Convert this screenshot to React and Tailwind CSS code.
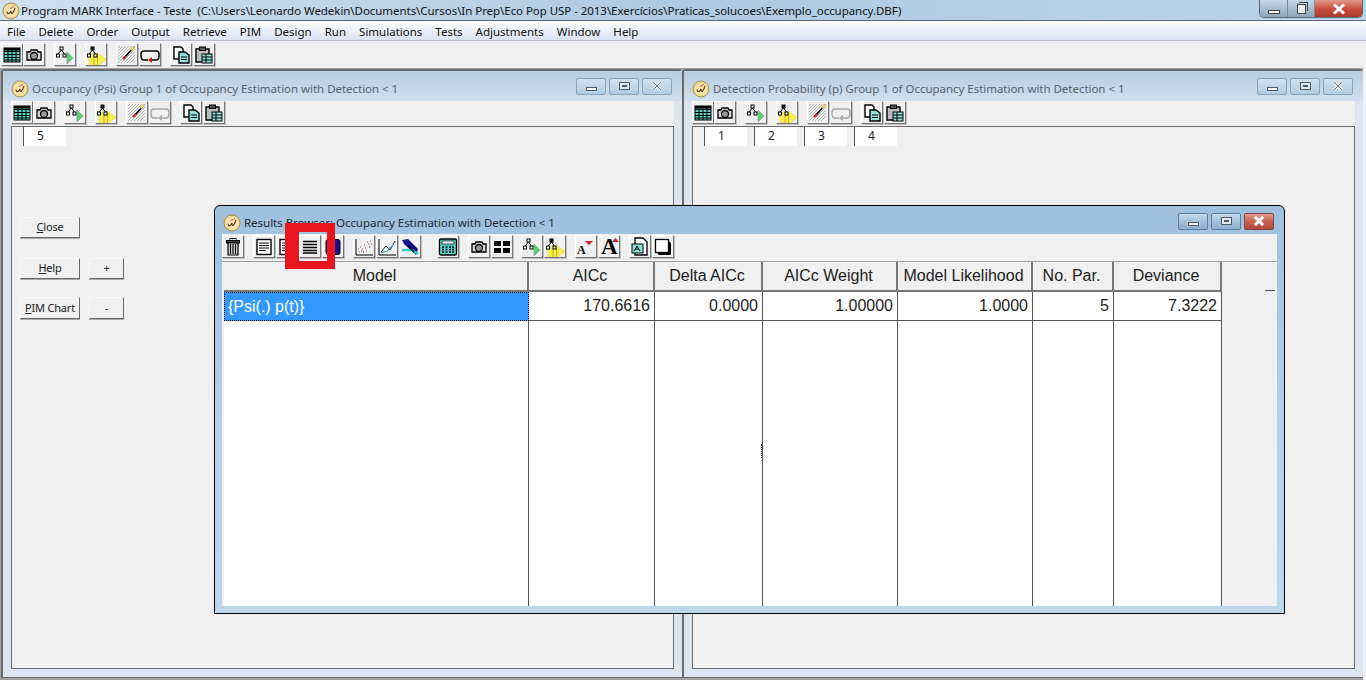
import React from "react";

const Logo = ({ className = "" }) => (
  <svg width="18" height="18" viewBox="0 0 18 18" className={className}>
    <circle cx="9" cy="9" r="8" fill="#f3d98f" stroke="#a98f5a" />
    <circle cx="9" cy="9" r="6" fill="#f7e4ad" />
    <path d="M5 9.5Q5.5 12.5 7 11.5T9 9Q9 12.5 10.5 11T13 6" fill="none" stroke="#5a3a1a" strokeWidth="1.1" />
    <path d="M8 6.5L12 4.5" stroke="#b33" strokeWidth="0.8" />
  </svg>
);

const S = ({ children }) => (
  <svg width="20" height="20" viewBox="0 0 20 20">{children}</svg>
);

const TableIcon = () => (
  <S>
    <rect x="2" y="3" width="16" height="14" fill="#5fd0c4" stroke="#000" />
    <path d="M2 6.5H18M2 9.5H18M2 12.5H18M2 15H18M6 3V17M10 3V17M14 3V17" stroke="#000" strokeWidth="1" />
    <rect x="2" y="3" width="16" height="2.5" fill="#000" />
  </S>
);
const CameraIcon = () => (
  <S>
    <path d="M3 7H6L7 5H13L14 7H17V15H3Z" fill="#d8d8d8" stroke="#000" strokeWidth="1.3" />
    <circle cx="10" cy="11" r="3.5" fill="#999" stroke="#000" strokeWidth="1.3" />
    <rect x="4" y="6" width="2" height="1" fill="#000" />
  </S>
);
const TreeArrow = ({ wide }) => (
  <S>
    {wide ? (
      <>
        <path d="M3 9H13L20 14.5L13 20H3Z" fill="#f6f04e" stroke="#ece25a" strokeWidth="0.8" />
        <path d="M8 11V20M11.5 10V20" stroke="#d0b030" />
      </>
    ) : (
      <path d="M12 7L18 13L12 19Z" fill="#5bd06a" stroke="#8a9" strokeWidth="0.8" />
    )}
    <rect x="5" y="2" width="3" height="3" fill={wide ? "#222" : "#fff"} stroke="#000" />
    <rect x="1.5" y="9" width="3" height="3" fill="#fff" stroke="#000" />
    <rect x="8" y="9" width="3" height="3" fill="#fff" stroke="#000" />
    <path d="M6.5 5L3 9M6.5 5L9.5 9" stroke="#000" />
  </S>
);
const WandIcon = () => (
  <S>
    <path d="M1 3L3 1M1 6L6 1M1 9L9 1M1 12L12 1M1 15L15 1M1 18L18 1M4 18L18 4M7 18L18 7M10 18L18 10M13 18L18 13" stroke="#a8a8a8" strokeWidth="0.9" />
    <path d="M8 12L17 2" stroke="#000" strokeWidth="1.6" />
    <path d="M14 5L17 2" stroke="#e8d64a" strokeWidth="2.2" />
    <path d="M6 14L9 11" stroke="#c22" strokeWidth="2.4" />
  </S>
);
const LoopIcon = ({ disabled }) => (
  <S>
    <path
      d="M8 15H4Q1 15 1 11V9Q1 6 4 6H16Q19 6 19 9V11Q19 15 16 15H12"
      fill="none"
      stroke={disabled ? "#a8a8a8" : "#000"}
      strokeWidth="1.5"
    />
    <path d="M12 12L8 15L12 18Z" fill={disabled ? "#a8a8a8" : "#d01818"} />
  </S>
);
const CopyIcon = () => (
  <S>
    <path d="M3 2H10L12 4V14H3Z" fill="#fff" stroke="#000" strokeWidth="1.4" />
    <path d="M8 7H14L18 10V18H8Z" fill="#8fe0d8" stroke="#000" strokeWidth="1.4" />
    <path d="M10 12H16M10 14.5H16" stroke="#000" />
  </S>
);
const PasteIcon = () => (
  <S>
    <path d="M2 4H15V17H2Z" fill="#bdbdbd" stroke="#000" strokeWidth="1.4" />
    <rect x="5.5" y="2" width="6" height="3.5" fill="#555" stroke="#000" />
    <rect x="8" y="9" width="10" height="9" fill="#8fe0d8" stroke="#000" />
    <path d="M8 12H18M8 15H18M12 9V18" stroke="#000" />
  </S>
);
const TrashIcon = () => (
  <S>
    <rect x="7" y="1.5" width="6" height="2" fill="none" stroke="#000" />
    <rect x="3.5" y="3.5" width="13" height="2.5" fill="#444" stroke="#000" />
    <path d="M5 6H15V18H5Z" fill="#ddd" stroke="#000" strokeWidth="1.2" />
    <path d="M7.5 7V17M10 7V17M12.5 7V17" stroke="#000" strokeWidth="1.2" />
  </S>
);
const LinesIcon = () => (
  <S>
    <rect x="3" y="2.5" width="14" height="15" fill="#fff" stroke="#000" strokeWidth="1.4" />
    <path d="M5 6H15M5 8.5H15M5 11H15M5 13.5H12" stroke="#000" />
  </S>
);
const Lines2Icon = () => (
  <S>
    <path d="M3 4.5H17M3 7.5H17M3 10.5H17M3 13.5H17M3 16H17" stroke="#000" strokeWidth="1.3" />
  </S>
);
const BlueIcon = () => (
  <S>
    <rect x="3" y="2.5" width="14" height="15" rx="2" fill="#10108c" stroke="#000" />
    <rect x="7.5" y="3.5" width="5" height="13" fill="#2727c8" />
  </S>
);
const ChartDots = () => (
  <S>
    <path d="M2 2V18H19" fill="none" stroke="#000" />
    <path d="M5 15h1M8 12h1M6 10h1M11 11h1M10 8h1M14 7h1M13 5h1M16 4h1M4 12h1M12 14h1" stroke="#c04040" />
    <path d="M7 14h1M9 15h1M15 10h1M17 7h1" stroke="#222" />
  </S>
);
const ChartLine = () => (
  <S>
    <path d="M2 2V18H19" fill="none" stroke="#000" />
    <path d="M4 15L9 9L13 13L18 4" fill="none" stroke="#222" />
    <path d="M4 16L10 14L16 8" fill="none" stroke="#4aa0c8" strokeWidth="1.3" />
  </S>
);
const ToolIcon = () => (
  <S>
    <path d="M2 3L8 2L18 12L16 18L4 7Z" fill="#10108c" />
    <path d="M2 13L12 13L18 17" fill="none" stroke="#37c7c7" strokeWidth="2.4" />
    <path d="M8 9L14 15" stroke="#000" strokeWidth="1.6" />
  </S>
);
const CalcIcon = () => (
  <S>
    <rect x="1.5" y="2" width="17" height="16" rx="1.5" fill="#56cfc9" stroke="#000" strokeWidth="1.3" />
    <rect x="4" y="4" width="12" height="3" fill="#fff" stroke="#000" strokeWidth="0.7" />
    <path d="M4 10h2M7.5 10h2M11 10h2M14 10h2M4 12.5h2M7.5 12.5h2M11 12.5h2M14 12.5h2M4 15h2M7.5 15h2M11 15h2M14 15h2" stroke="#000" strokeWidth="1.4" />
  </S>
);
const Grid4Icon = () => (
  <S>
    <rect x="2" y="4" width="7" height="5" fill="#000" />
    <rect x="11" y="4" width="7" height="5" fill="#000" />
    <rect x="2" y="11" width="7" height="5" fill="#000" />
    <rect x="11" y="11" width="7" height="5" fill="#000" />
  </S>
);
const GlyphA = ({ big }) => (
  <span className="relative block h-[20px] w-[20px] [font-family:'Liberation_Serif',serif] font-bold leading-none text-black">
    <span className={big ? "absolute bottom-0 left-[2px] text-[23px] leading-[20px]" : "absolute bottom-[1px] left-[1px] text-[12px] leading-[12px]"}>
      A
    </span>
    <svg width="20" height="20" viewBox="0 0 20 20" className="absolute left-0 top-0">
      {big ? <path d="M13 5L16.5 1L20 5Z" fill="#c22" /> : <path d="M9 4H17L13 8Z" fill="#c22" />}
    </svg>
  </span>
);
const DocIcon = () => (
  <S>
    <path d="M5 1H13L17 5V18H5Z" fill="#fff" stroke="#000" strokeWidth="1.3" />
    <rect x="2" y="7" width="11" height="9" fill="#8fe0d8" stroke="#000" />
    <path d="M4 14L7 9M7 9L10 14M5 12H9" stroke="#000" />
  </S>
);
const SquareIcon = () => (
  <S>
    <rect x="5" y="5" width="13" height="13" rx="1.5" fill="#000" />
    <rect x="2.5" y="2.5" width="13" height="13" fill="#fff" stroke="#000" strokeWidth="1.3" />
  </S>
);

const Tb = ({ children }) => (
  <div className="flex h-[23px] w-[22px] shrink-0 items-center justify-center border border-b-[#777] border-l-white border-r-[#777] border-t-white bg-[#f0f0f0] shadow-[1px_1px_0_#c0c0c0]">
    {children}
  </div>
);

const ChildToolbar = ({ loopDisabled = true }) => (
  <div className="flex items-start bg-[#f0f0f0]">
    <Tb><TableIcon /></Tb>
    <Tb><CameraIcon /></Tb>
    <div className="w-[9px]" />
    <Tb><TreeArrow /></Tb>
    <div className="w-[9px]" />
    <Tb><TreeArrow wide /></Tb>
    <div className="w-[9px]" />
    <Tb><WandIcon /></Tb>
    <div className="w-px" />
    <Tb><LoopIcon disabled={loopDisabled} /></Tb>
    <div className="w-[9px]" />
    <Tb><CopyIcon /></Tb>
    <div className="w-px" />
    <Tb><PasteIcon /></Tb>
  </div>
);

const CapBtn = ({ kind, active }) => {
  const bg =
    kind === "close" && active
      ? "bg-gradient-to-b from-[#e29b8d] via-[#c9604e] to-[#b8483a] border-[#7a4a48]"
      : active
      ? "bg-gradient-to-b from-[#c6dbed] via-[#a4c0da] to-[#8fb0cf] border-[#5f7c98]"
      : "bg-gradient-to-b from-[#cfe0ee] to-[#b4cde3] border-[#8ba3b8]";
  return (
    <div className={`flex h-[17px] w-[30px] items-center justify-center rounded-[2px] border ${bg}`}>
      {kind === "min" && <div className="mt-[5px] h-[4px] w-[11px] border border-[#4b5b6a] bg-white" />}
      {kind === "max" && <div className="flex h-[8px] w-[11px] items-center justify-center border border-[#4b5b6a] bg-[#dfe8f0]"><div className="h-[2px] w-[5px] bg-[#4b5b6a]" /></div>}
      {kind === "close" && (
        <svg width="12" height="10" viewBox="0 0 12 10">
          <path d="M2 1L10 9M10 1L2 9" stroke={active ? "#fff" : "#e9eef3"} strokeWidth="3" />
          <path d="M2 1L10 9M10 1L2 9" stroke={active ? "#fff" : "#4b5b6a"} strokeWidth={active ? 2 : 0.8} fill="none" />
        </svg>
      )}
    </div>
  );
};

const CapGroup = ({ active }) => (
  <div className="flex gap-[3px]">
    <CapBtn kind="min" active={active} />
    <CapBtn kind="max" active={active} />
    <CapBtn kind="close" active={active} />
  </div>
);

const Cell = ({ n }) => (
  <div className="flex h-[19px] w-[43px] border-l border-[#555] bg-white text-[12px] leading-[18px] text-[#222]">
    <span className="w-[33px] text-center">{n}</span>
  </div>
);

const LegacyBtn = ({ className = "", children }) => (
  <div className={`flex items-center justify-center border border-b-[#666] border-l-[#f8f8f8] border-r-[#666] border-t-[#f8f8f8] bg-[#f0f0f0] text-[11px] tracking-[-0.2px] text-[#222] shadow-[0_1px_0_#aaa] ${className}`}>
    {children}
  </div>
);

const ChildWindow = ({ className, title, cells, children }) => (
  <div className={`absolute top-[1px] flex h-[608px] flex-col rounded-tl-[4px] rounded-tr-[4px] border-l-2 border-t-2 border-[#6a6a6a] bg-[#dce6f0] shadow-[0_1px_0_#666] ${className}`}>
    <div className="flex h-[30px] shrink-0 items-center justify-between bg-gradient-to-b from-[#b6cce0] to-[#d0e0ee] pl-[8px] pr-[10px]">
      <div className="flex items-center gap-[3px] pt-[5px] text-[11.5px] tracking-[-0.03px] text-[#56636e]">
        <Logo />
        <span>{title}</span>
      </div>
      <CapGroup />
    </div>
    <div className="mx-[8px] flex h-[25px] shrink-0 items-start bg-[#f0f0f0]">
      <ChildToolbar />
    </div>
    <div className="mx-[8px] mb-[8px] flex-1 border border-[#6a6a6a] bg-[#f0f0f0]">
      <div className="flex gap-[7px] pl-[11px]">
        {cells.map((c) => (
          <Cell key={c} n={c} />
        ))}
      </div>
      {children}
    </div>
  </div>
);

const columns = [
  ["Model", "{Psi(.) p(t)}"],
  ["AICc", "170.6616"],
  ["Delta AICc", "0.0000"],
  ["AICc Weight", "1.00000"],
  ["Model Likelihood", "1.0000"],
  ["No. Par.", "5"],
  ["Deviance", "7.3222"],
];
const gridCols = "grid grid-cols-[305px_126px_108px_135px_135px_81px_108px]";

const ResultsWindow = () => (
  <div className="absolute left-[214px] top-[137px] flex h-[409px] w-[1071px] flex-col rounded-t-[6px] border border-black bg-gradient-to-b from-[#9fc0dd] via-[#b4d0e8] to-[#bcd6ea] px-[7px] pb-[7px]">
    <div className="flex h-[28px] shrink-0 items-center justify-between pl-[1px] pr-[3px]">
      <div className="flex items-center gap-[3px] pt-[5px] text-[11.5px] tracking-[-0.03px] text-[#1e2a33]">
        <Logo />
        <span>Results Browser: Occupancy Estimation with Detection &lt; 1</span>
      </div>
      <div className="mt-[2px]"><CapGroup active /></div>
    </div>
    <div className="flex h-[27px] shrink-0 items-start gap-px bg-[#f0f0f0] pt-px">
      <Tb><TrashIcon /></Tb>
      <div className="w-[7px]" />
      <Tb><LinesIcon /></Tb>
      <Tb><LinesIcon /></Tb>
      <Tb><Lines2Icon /></Tb>
      <Tb><BlueIcon /></Tb>
      <div className="w-[7px]" />
      <Tb><ChartDots /></Tb>
      <Tb><ChartLine /></Tb>
      <Tb><ToolIcon /></Tb>
      <div className="w-[14px]" />
      <Tb><CalcIcon /></Tb>
      <div className="w-[7px]" />
      <Tb><CameraIcon /></Tb>
      <Tb><Grid4Icon /></Tb>
      <div className="w-[6px]" />
      <Tb><TreeArrow /></Tb>
      <Tb><TreeArrow wide /></Tb>
      <div className="w-[7px]" />
      <Tb><GlyphA /></Tb>
      <Tb><GlyphA big /></Tb>
      <div className="w-[7px]" />
      <Tb><DocIcon /></Tb>
      <Tb><SquareIcon /></Tb>
    </div>
    <div className="flex flex-1 flex-col border-t border-[#a0a0a0] bg-[#f0f0f0] pl-[2px] [font-family:'Liberation_Sans',sans-serif] text-[16px]">
      <div className={`${gridCols} h-[30px] w-fit shrink-0`}>
        {columns.map(([h]) => (
          <div key={h} className="flex items-center justify-center border-b-2 border-r-2 border-b-[#777] border-r-[#777] bg-[#f0f0f0] pb-[1px] pr-[2px] text-[#222]">
            {h}
          </div>
        ))}
      </div>
      <div className={`${gridCols} h-[29px] w-fit shrink-0 bg-white`}>
        {columns.map(([h, v], i) =>
          i === 0 ? (
            <div key={h} className="flex items-center border border-dotted border-black bg-[#3399ff] pl-[3px] text-white">
              {v}
            </div>
          ) : (
            <div key={h} className="flex items-center justify-end border-b border-r border-[#555] pr-[4px] text-[#222]">
              {v}
            </div>
          )
        )}
      </div>
      <div className={`${gridCols} w-fit flex-1`}>
        {columns.map(([h]) => (
          <div key={h} className="border-r border-[#555] bg-white" />
        ))}
      </div>
    </div>
    {/* stray marks left in the grid's repaint */}
    <div className="absolute left-[1050px] top-[84px] h-px w-[10px] bg-[#555]" />
    <div className="absolute left-[546px] top-[238px] h-[14px] w-px border-l border-dotted border-black" />
  </div>
);

const menus = ["File", "Delete", "Order", "Output", "Retrieve", "PIM", "Design", "Run", "Simulations", "Tests", "Adjustments", "Window", "Help"];

export default function App() {
  return (
    <div className="relative flex h-[680px] w-[1366px] flex-col overflow-hidden bg-[#a2a2a2] [font-family:'Noto_Sans',sans-serif]">
      <div className="flex h-[21px] shrink-0 items-start justify-between border-b border-[#5a6a78] bg-gradient-to-r from-[#cfe0ef] via-[#aecbe3] to-[#b9d4ea] pl-[2px] pr-[3px]">
        <div className="flex h-[20px] items-center gap-px whitespace-pre pt-px text-[11.5px] tracking-[-0.05px] text-[#111]">
          <Logo />
          <span>Program MARK Interface - Teste  (C:\Users\Leonardo Wedekin\Documents\Cursos\In Prep\Eco Pop USP - 2013\Exercícios\Praticas_solucoes\Exemplo_occupancy.DBF)</span>
        </div>
        <div className="flex h-[18px] overflow-hidden rounded-b-[5px] border border-t-0 border-[#57687a]">
          <div className="flex w-[28px] items-center justify-center border-r border-[#7a8a9a] bg-gradient-to-b from-[#c7d7e5] to-[#8ea5bd]">
            <div className="mt-[6px] h-[4px] w-[12px] border border-[#444] bg-white" />
          </div>
          <div className="flex w-[27px] items-center justify-center border-r border-[#7a8a9a] bg-gradient-to-b from-[#c7d7e5] to-[#8ea5bd]">
            <div className="relative h-[10px] w-[9px] border border-[#444] bg-[#e4ecf3]">
              <div className="absolute -right-[3px] -top-[3px] h-[9px] w-[9px] border-r border-t border-[#444]" />
            </div>
          </div>
          <div className="flex w-[47px] items-center justify-center bg-gradient-to-b from-[#e2968a] via-[#c8503f] to-[#a93a2c]">
            <svg width="16" height="12" viewBox="0 0 16 12">
              <path d="M3 1.5L13 10.5M13 1.5L3 10.5" stroke="#fff" strokeWidth="3" />
            </svg>
          </div>
        </div>
      </div>
      <div className="flex h-[20px] shrink-0 items-center gap-[13px] border-b border-[#b9c0cc] bg-gradient-to-b from-white to-[#d9e1f2] pl-[7px] pt-[2px] text-[11.5px] text-[#111]">
        {menus.map((m) => (
          <span key={m}>{m}</span>
        ))}
      </div>
      <div className="flex h-[27px] shrink-0 items-start bg-[#f0f0f0] pl-px pt-[2px]">
        <ChildToolbar loopDisabled={false} />
      </div>
      <div className="relative flex-1 border-r-[3px] border-[#f0f0f0]">
        <ChildWindow className="left-[1px] w-[681px]" title="Occupancy (Psi) Group 1 of Occupancy Estimation with Detection < 1" cells={["5"]}>
          <div className="flex flex-col pl-[8px] pt-[71px]">
            <LegacyBtn className="h-[21px] w-[60px]"><span><u>C</u>lose</span></LegacyBtn>
            <div className="mt-[20px] flex gap-[9px]">
              <LegacyBtn className="h-[21px] w-[60px]"><span><u>H</u>elp</span></LegacyBtn>
              <LegacyBtn className="h-[21px] w-[35px]">+</LegacyBtn>
            </div>
            <div className="mt-[18px] flex gap-[9px]">
              <LegacyBtn className="h-[22px] w-[60px]"><span><u>P</u>IM Chart</span></LegacyBtn>
              <LegacyBtn className="h-[22px] w-[35px]">-</LegacyBtn>
            </div>
          </div>
        </ChildWindow>
        <ChildWindow className="left-[682px] w-[681px]" title="Detection Probability (p) Group 1 of Occupancy Estimation with Detection < 1" cells={["1", "2", "3", "4"]} />
        <ResultsWindow />
      </div>
      <div className="absolute left-[285px] top-[223px] z-10 h-[46px] w-[50px] border-b-[8px] border-l-[14px] border-r-[8px] border-t-[9px] border-[#e8141e]" />
    </div>
  );
}
